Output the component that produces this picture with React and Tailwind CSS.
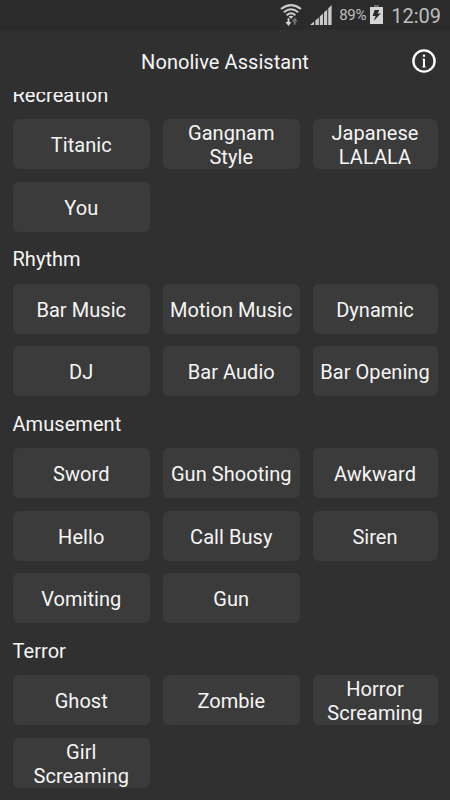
import React from 'react';

const sections = [
  { title: 'Recreation', items: ['Titanic', 'Gangnam Style', 'Japanese LALALA', 'You'] },
  { title: 'Rhythm', items: ['Bar Music', 'Motion Music', 'Dynamic', 'DJ', 'Bar Audio', 'Bar Opening'] },
  {
    title: 'Amusement',
    items: ['Sword', 'Gun Shooting', 'Awkward', 'Hello', 'Call Busy', 'Siren', 'Vomiting', 'Gun'],
  },
  { title: 'Terror', items: ['Ghost', 'Zombie', 'Horror Screaming', 'Girl Screaming'] },
];

const WifiIcon = () => (
  <svg width="22" height="22" viewBox="0 0 22 22" fill="none" stroke="#c9c9c9" strokeWidth="2">
    <path d="M1 5Q11 -2.8 21 5" />
    <path d="M3.8 8.2Q11 2.4 18.2 8.2" />
    <path d="M6.6 11.2Q11 7.4 15.4 11.2" />
    <path d="M8.6 12.6Q11 10.8 13.4 12.6L11 15Z" fill="#c9c9c9" stroke="none" />
    <path d="M7.6 14.2H9.4V18H11.4L8.5 22L5.4 18H7.6Z" fill="#d5d5d5" stroke="none" />
    <path d="M13.8 20.8H15.6V17.4H17.8L14.7 13.4L11.8 17.4H13.8Z" fill="#757575" stroke="none" />
  </svg>
);

const SignalIcon = () => (
  <svg width="22" height="20" viewBox="0 0 22 20" fill="#c9c9c9">
    <path d="M0 20L4 16.4V20Z" />
    <path d="M5.4 15.4L8.8 12.4V20H5.4Z" />
    <path d="M9.8 11.6L13 8.6V20H9.8Z" />
    <path d="M14 7.6L17.2 4.6V20H14Z" />
    <path d="M18.2 3.6L21.6 0V20H18.2Z" />
  </svg>
);

const BatteryIcon = () => (
  <svg width="13" height="19" viewBox="0 0 13 19">
    <path d="M4 0H9V2H4Z" fill="#6b6b6b" />
    <path d="M0 2H13V19H0Z" fill="#d5d5d5" />
    <path d="M4.6 5H9.4L7.6 8.6H10.8L3.6 16L5.6 11H2.6Z" fill="#2a2a2a" />
  </svg>
);

const InfoIcon = () => (
  <svg width="24" height="24" viewBox="0 0 24 24" fill="none" stroke="#fff">
    <circle cx="12" cy="12" r="10.6" strokeWidth="2.4" />
    <path d="M10.4 10.1H12M10.2 17.9H13.8" strokeWidth="0.9" />
    <path d="M12 9.7V18.3" strokeWidth="2" />
    <path d="M12 5.6V7.8" strokeWidth="2.2" />
  </svg>
);

const StatusBar = () => (
  <div className="flex h-[30px] shrink-0 items-start justify-end bg-[#2b2b2b] pr-[9px] text-[#bebebe]">
    <div className="mt-[4px] mr-[8px]"><WifiIcon /></div>
    <div className="mt-[5px] mr-[7px]"><SignalIcon /></div>
    <span className="mt-[5px] mr-[4px] text-[15px] leading-[21px] tracking-[-0.3px]">89%</span>
    <div className="mt-[5px] mr-[8px]"><BatteryIcon /></div>
    <span className="mt-[4px] text-[20px] leading-6">12:09</span>
  </div>
);

const Header = () => (
  <div className="grid h-[62px] shrink-0 grid-cols-[1fr_auto_1fr] items-center pr-[14px]">
    <h1 className="col-start-2 pt-[2px] pl-[14px] text-[20px] leading-6 tracking-[0.05px]">Nonolive Assistant</h1>
    <button type="button" aria-label="Info" className="justify-self-end"><InfoIcon /></button>
  </div>
);

const Section = ({ title, items }) => (
  <section>
    <h2 className="h-[39.5px] pt-[3px] text-[20px] leading-6 tracking-[0.05px]">{title}</h2>
    <div className="grid grid-cols-[137.5px_137.5px_125px] gap-x-[12.5px]">
      {items.map(item => (
        <button
          key={item}
          type="button"
          className="mb-[12.5px] flex h-[50px] items-center justify-center rounded-md bg-[#3b3b3b] px-1 pt-[2.2px] text-center text-[20px] leading-6 tracking-[0.05px]"
        >
          {item}
        </button>
      ))}
    </div>
  </section>
);

const App = () => (
  <div className="flex h-[800px] w-[450px] flex-col overflow-hidden bg-[#303030] font-['Roboto',sans-serif] text-[#f5f5f5]">
    <StatusBar />
    <Header />
    <main className="min-h-0 flex-1 overflow-hidden px-[12.5px]">
      <div className="-mt-[12.3px]">
        {sections.map(section => (
          <Section key={section.title} title={section.title} items={section.items} />
        ))}
      </div>
    </main>
  </div>
);

export default App;
